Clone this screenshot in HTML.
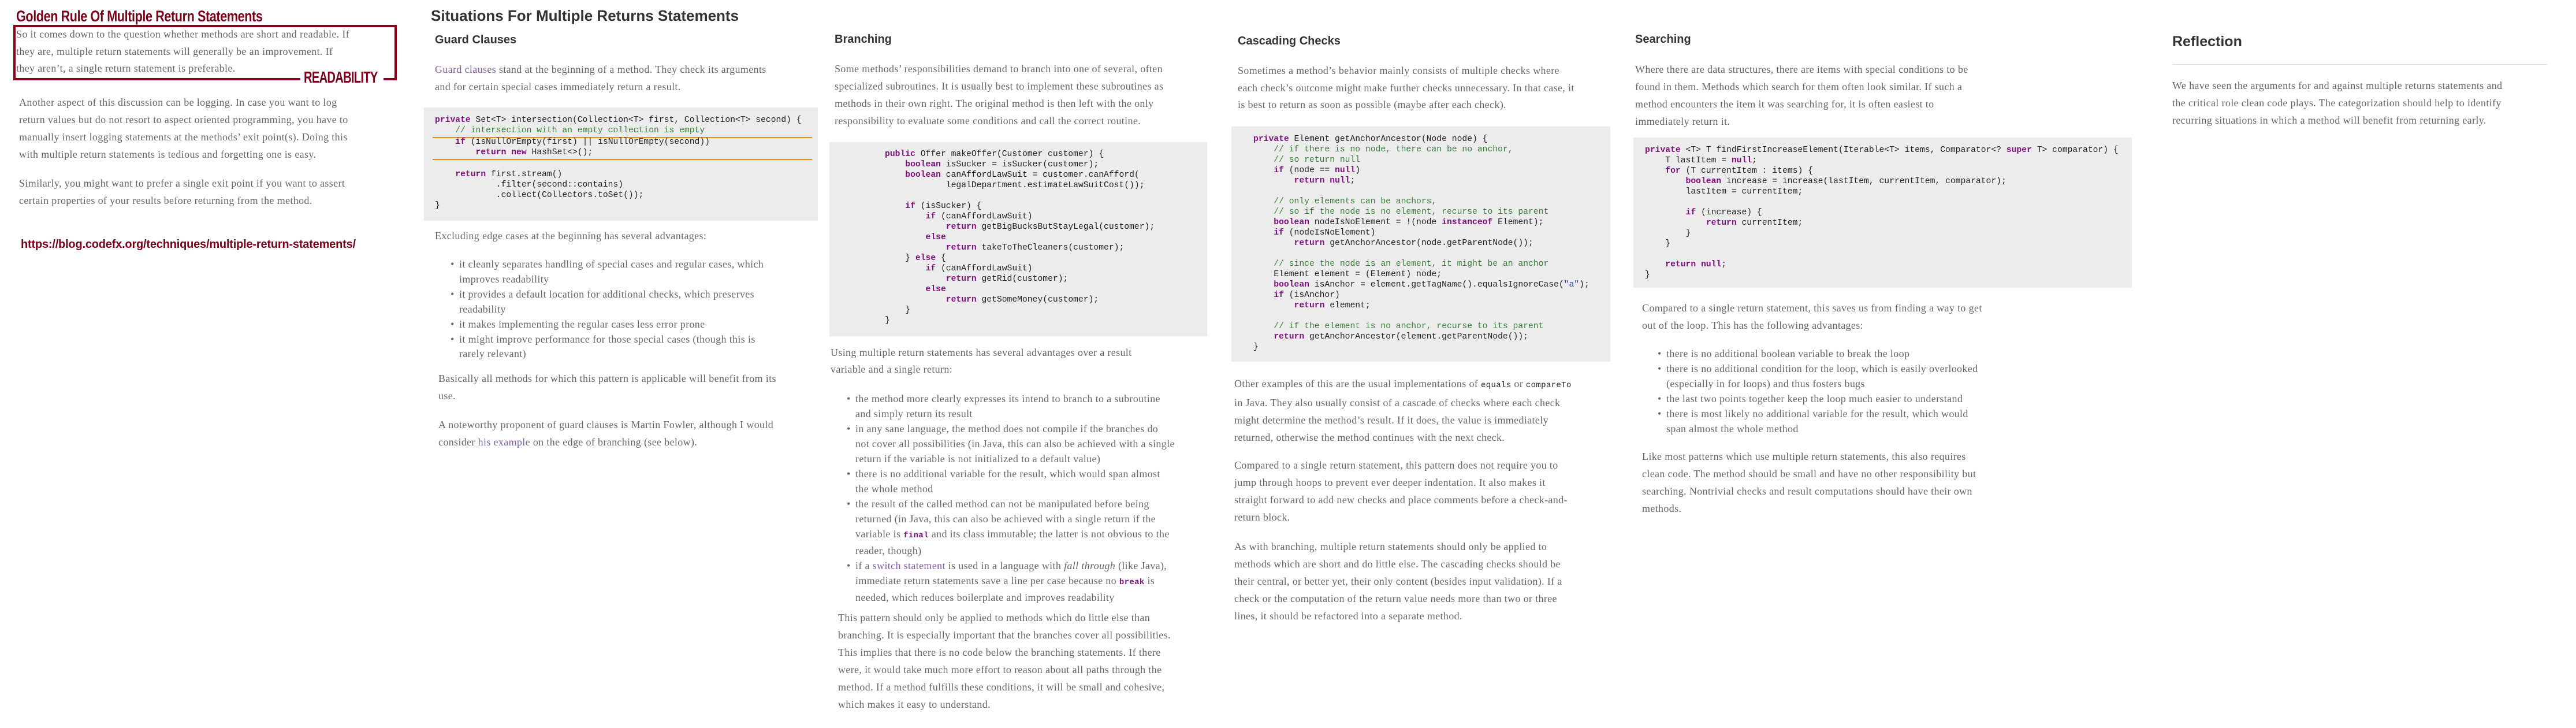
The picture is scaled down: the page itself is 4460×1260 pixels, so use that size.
<!DOCTYPE html>
<html><head><meta charset="utf-8">
<style>
*{margin:0;padding:0;box-sizing:border-box}
html,body{width:4460px;height:1260px;overflow:hidden;background:#fff}
body{position:relative;font-family:"Liberation Serif",serif;color:#666}
.a{position:absolute;white-space:nowrap}
.t{font-size:18px;letter-spacing:0.35px;line-height:30px;color:#666}
.h{font-family:"Liberation Sans",sans-serif;font-weight:bold;color:#333}
.h3{font-size:20px;line-height:26px}
.cb{position:absolute;background:#ececec}
pre{font-family:"Liberation Mono",monospace;font-size:14.7px;line-height:18px;color:#222;white-space:pre !important}
.k{color:#7f0f7f;font-weight:bold}
.c{color:#3a7d3a}
.s{color:#2a3fc9}
.b{position:absolute;margin-left:-15px}
.ln{color:#8060a8}
code{font-family:"Liberation Mono",monospace;font-size:14px;color:#222}
code.kk{color:#7f0f7f;font-weight:bold}
.red{color:#7a0019}
.nar{font-family:"Liberation Sans",sans-serif;font-weight:bold;transform-origin:0 0}
</style></head><body>

<!-- Left column -->
<div class="a nar red" style="left:28px;top:13px;font-size:27px;line-height:30px;letter-spacing:-0.5px;transform:scaleX(0.8)">Golden Rule Of Multiple Return Statements</div>
<div class="a" style="left:23px;top:43px;width:664px;height:96px;border:4px solid #8b0018"></div>
<div class="a t" style="left:28px;top:45px;line-height:29.7px;color:#666">So it comes down to the question whether methods are short and readable. If<br>they are, multiple return statements will generally be an improvement. If<br>they aren’t, a single return statement is preferable.</div>
<div class="a" style="left:520px;top:121px;width:144px;height:28px;background:#fff"></div>
<div class="a nar red" style="left:526px;top:120px;font-size:28px;line-height:28px;letter-spacing:-1px;transform:scaleX(0.72)">READABILITY</div>
<div class="a t" style="left:33px;top:162px">Another aspect of this discussion can be logging. In case you want to log<br>return values but do not resort to aspect oriented programming, you have to<br>manually insert logging statements at the methods’ exit point(s). Doing this<br>with multiple return statements is tedious and forgetting one is easy.</div>
<div class="a t" style="left:33px;top:302px">Similarly, you might want to prefer a single exit point if you want to assert<br>certain properties of your results before returning from the method.</div>
<div class="a red" style="left:36px;top:411px;font-family:'Liberation Sans',sans-serif;font-weight:bold;font-size:20px;line-height:24px;letter-spacing:-0.2px">https://blog.codefx.org/techniques/multiple-return-statements/</div>

<!-- Guard clauses -->
<div class="a h" style="left:746px;top:10px;font-size:26px;line-height:34px">Situations For Multiple Returns Statements</div>
<div class="a h h3" style="left:753px;top:56px">Guard Clauses</div>
<div class="a t" style="left:753px;top:105px"><span class="ln">Guard clauses</span> stand at the beginning of a method. They check its arguments<br>and for certain special cases immediately return a result.</div>
<div class="cb" style="left:734px;top:186px;width:682px;height:196px"></div>
<pre class="a" style="left:753px;top:199px"><span class="k">private</span> Set&lt;T&gt; intersection(Collection&lt;T&gt; first, Collection&lt;T&gt; second) {
    <span class="c">// intersection with an empty collection is empty</span></pre>
<div class="a" style="left:749px;top:237px;width:657px;height:2px;background:#f28c00"></div>
<pre class="a" style="left:753px;top:237px">    <span class="k">if</span> (isNullOrEmpty(first) || isNullOrEmpty(second))
        <span class="k">return new</span> HashSet&lt;&gt;();</pre>
<div class="a" style="left:749px;top:275px;width:657px;height:2px;background:#f28c00"></div>
<pre class="a" style="left:753px;top:293px">    <span class="k">return</span> first.stream()
            .filter(second::contains)
            .collect(Collectors.toSet());
}</pre>
<div class="a t" style="left:753px;top:393px">Excluding edge cases at the beginning has several advantages:</div>
<div class="a t" style="left:795px;top:445px;line-height:25.9px"><span class="b">•</span>it cleanly separates handling of special cases and regular cases, which<br>improves readability<br><span class="b">•</span>it provides a default location for additional checks, which preserves<br>readability<br><span class="b">•</span>it makes implementing the regular cases less error prone<br><span class="b">•</span>it might improve performance for those special cases (though this is<br>rarely relevant)</div>
<div class="a t" style="left:759px;top:640px">Basically all methods for which this pattern is applicable will benefit from its<br>use.</div>
<div class="a t" style="left:759px;top:720px">A noteworthy proponent of guard clauses is Martin Fowler, although I would<br>consider <span class="ln">his example</span> on the edge of branching (see below).</div>

<!-- Branching -->
<div class="a h h3" style="left:1445px;top:55px">Branching</div>
<div class="a t" style="left:1445px;top:104px">Some methods’ responsibilities demand to branch into one of several, often<br>specialized subroutines. It is usually best to implement these subroutines as<br>methods in their own right. The original method is then left with the only<br>responsibility to evaluate some conditions and call the correct routine.</div>
<div class="cb" style="left:1436px;top:246px;width:654px;height:336px"></div>
<pre class="a" style="left:1532px;top:258px"><span class="k">public</span> Offer makeOffer(Customer customer) {
    <span class="k">boolean</span> isSucker = isSucker(customer);
    <span class="k">boolean</span> canAffordLawSuit = customer.canAfford(
            legalDepartment.estimateLawSuitCost());

    <span class="k">if</span> (isSucker) {
        <span class="k">if</span> (canAffordLawSuit)
            <span class="k">return</span> getBigBucksButStayLegal(customer);
        <span class="k">else</span>
            <span class="k">return</span> takeToTheCleaners(customer);
    } <span class="k">else</span> {
        <span class="k">if</span> (canAffordLawSuit)
            <span class="k">return</span> getRid(customer);
        <span class="k">else</span>
            <span class="k">return</span> getSomeMoney(customer);
    }
}</pre>
<div class="a t" style="left:1438px;top:596px;line-height:29px">Using multiple return statements has several advantages over a result<br>variable and a single return:</div>
<div class="a t" style="left:1481px;top:677px;line-height:26px"><span class="b">•</span>the method more clearly expresses its intend to branch to a subroutine<br>and simply return its result<br><span class="b">•</span>in any sane language, the method does not compile if the branches do<br>not cover all possibilities (in Java, this can also be achieved with a single<br>return if the variable is not initialized to a default value)<br><span class="b">•</span>there is no additional variable for the result, which would span almost<br>the whole method<br><span class="b">•</span>the result of the called method can not be manipulated before being<br>returned (in Java, this can also be achieved with a single return if the<br>variable is <code class="kk">final</code> and its class immutable; the latter is not obvious to the<br>reader, though)<br><span class="b">•</span>if a <span class="ln">switch statement</span> is used in a language with <i>fall through</i> (like Java),<br>immediate return statements save a line per case because no <code class="kk">break</code> is<br>needed, which reduces boilerplate and improves readability</div>
<div class="a t" style="left:1451px;top:1054px">This pattern should only be applied to methods which do little else than<br>branching. It is especially important that the branches cover all possibilities.<br>This implies that there is no code below the branching statements. If there<br>were, it would take much more effort to reason about all paths through the<br>method. If a method fulfills these conditions, it will be small and cohesive,<br>which makes it easy to understand.</div>

<!-- Cascading -->
<div class="a h h3" style="left:2143px;top:58px">Cascading Checks</div>
<div class="a t" style="left:2143px;top:108px;line-height:29.5px">Sometimes a method’s behavior mainly consists of multiple checks where<br>each check’s outcome might make further checks unnecessary. In that case, it<br>is best to return as soon as possible (maybe after each check).</div>
<div class="cb" style="left:2132px;top:219px;width:656px;height:407px"></div>
<pre class="a" style="left:2170px;top:232px"><span class="k">private</span> Element getAnchorAncestor(Node node) {
    <span class="c">// if there is no node, there can be no anchor,</span>
    <span class="c">// so return null</span>
    <span class="k">if</span> (node == <span class="k">null</span>)
        <span class="k">return null</span>;

    <span class="c">// only elements can be anchors,</span>
    <span class="c">// so if the node is no element, recurse to its parent</span>
    <span class="k">boolean</span> nodeIsNoElement = !(node <span class="k">instanceof</span> Element);
    <span class="k">if</span> (nodeIsNoElement)
        <span class="k">return</span> getAnchorAncestor(node.getParentNode());

    <span class="c">// since the node is an element, it might be an anchor</span>
    Element element = (Element) node;
    <span class="k">boolean</span> isAnchor = element.getTagName().equalsIgnoreCase(<span class="s">"a"</span>);
    <span class="k">if</span> (isAnchor)
        <span class="k">return</span> element;

    <span class="c">// if the element is no anchor, recurse to its parent</span>
    <span class="k">return</span> getAnchorAncestor(element.getParentNode());
}</pre>
<div class="a t" style="left:2137px;top:649px">Other examples of this are the usual implementations of <code>equals</code> or <code>compareTo</code><br>in Java. They also usually consist of a cascade of checks where each check<br>might determine the method’s result. If it does, the value is immediately<br>returned, otherwise the method continues with the next check.</div>
<div class="a t" style="left:2137px;top:790px">Compared to a single return statement, this pattern does not require you to<br>jump through hoops to prevent ever deeper indentation. It also makes it<br>straight forward to add new checks and place comments before a check-and-<br>return block.</div>
<div class="a t" style="left:2137px;top:931px">As with branching, multiple return statements should only be applied to<br>methods which are short and do little else. The cascading checks should be<br>their central, or better yet, their only content (besides input validation). If a<br>check or the computation of the return value needs more than two or three<br>lines, it should be refactored into a separate method.</div>

<!-- Searching -->
<div class="a h h3" style="left:2831px;top:55px">Searching</div>
<div class="a t" style="left:2831px;top:105px">Where there are data structures, there are items with special conditions to be<br>found in them. Methods which search for them often look similar. If such a<br>method encounters the item it was searching for, it is often easiest to<br>immediately return it.</div>
<div class="cb" style="left:2828px;top:238px;width:863px;height:260px"></div>
<pre class="a" style="left:2848px;top:251px"><span class="k">private</span> &lt;T&gt; T findFirstIncreaseElement(Iterable&lt;T&gt; items, Comparator&lt;? <span class="k">super</span> T&gt; comparator) {
    T lastItem = <span class="k">null</span>;
    <span class="k">for</span> (T currentItem : items) {
        <span class="k">boolean</span> increase = increase(lastItem, currentItem, comparator);
        lastItem = currentItem;

        <span class="k">if</span> (increase) {
            <span class="k">return</span> currentItem;
        }
    }

    <span class="k">return null</span>;
}</pre>
<div class="a t" style="left:2843px;top:518px">Compared to a single return statement, this saves us from finding a way to get<br>out of the loop. This has the following advantages:</div>
<div class="a t" style="left:2885px;top:599px;line-height:26px"><span class="b">•</span>there is no additional boolean variable to break the loop<br><span class="b">•</span>there is no additional condition for the loop, which is easily overlooked<br>(especially in for loops) and thus fosters bugs<br><span class="b">•</span>the last two points together keep the loop much easier to understand<br><span class="b">•</span>there is most likely no additional variable for the result, which would<br>span almost the whole method</div>
<div class="a t" style="left:2843px;top:775px">Like most patterns which use multiple return statements, this also requires<br>clean code. The method should be small and have no other responsibility but<br>searching. Nontrivial checks and result computations should have their own<br>methods.</div>

<!-- Reflection -->
<div class="a h" style="left:3761px;top:56px;font-size:25px;line-height:32px">Reflection</div>
<div class="a" style="left:3761px;top:111px;width:649px;height:1px;background:#ddd"></div>
<div class="a t" style="left:3761px;top:133px">We have seen the arguments for and against multiple returns statements and<br>the critical role clean code plays. The categorization should help to identify<br>recurring situations in which a method will benefit from returning early.</div>

</body></html>
